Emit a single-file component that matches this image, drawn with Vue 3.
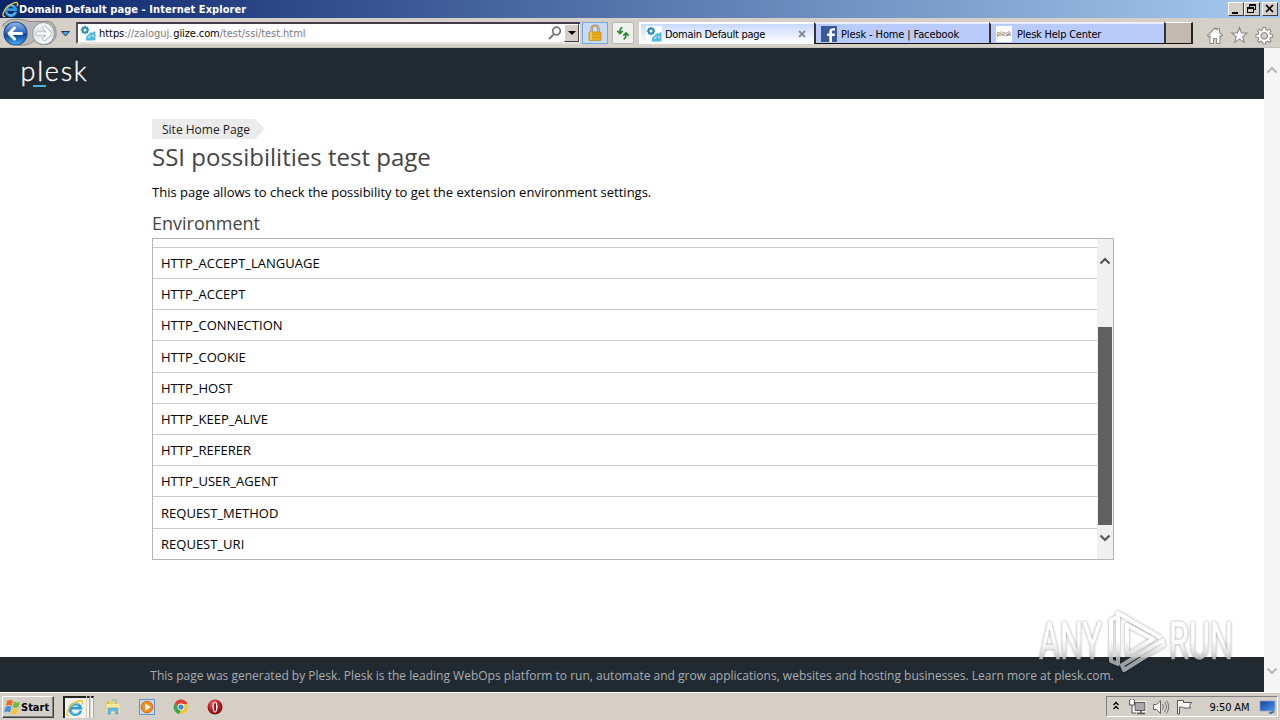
<script setup>
const rows = [
  'HTTP_ACCEPT_LANGUAGE', 'HTTP_ACCEPT', 'HTTP_CONNECTION', 'HTTP_COOKIE', 'HTTP_HOST',
  'HTTP_KEEP_ALIVE', 'HTTP_REFERER', 'HTTP_USER_AGENT', 'REQUEST_METHOD', 'REQUEST_URI',
]
</script>

<template>
  <div class="desktop">
    <svg class="defs" width="0" height="0">
      <defs>
        <linearGradient id="orb" x1="0" y1="0" x2="0" y2="1">
          <stop offset="0" stop-color="#8fb9ea" /><stop offset=".45" stop-color="#2e6cc4" />
          <stop offset=".55" stop-color="#0c459f" /><stop offset="1" stop-color="#49b0ee" />
        </linearGradient>
        <linearGradient id="orb2" x1="0" y1="0" x2="0" y2="1">
          <stop offset="0" stop-color="#f4f7fa" /><stop offset=".5" stop-color="#dbe1e9" /><stop offset="1" stop-color="#fafcfe" />
        </linearGradient>
        <linearGradient id="screen" x1="0" y1="0" x2="1" y2="1">
          <stop offset="0" stop-color="#143f9c" /><stop offset="1" stop-color="#4b9be8" />
        </linearGradient>
        <radialGradient id="red" cx=".4" cy=".3" r=".7">
          <stop offset="0" stop-color="#f06a6a" /><stop offset=".6" stop-color="#b81820" /><stop offset="1" stop-color="#7c0a10" />
        </radialGradient>
        <symbol id="ie" viewBox="0 0 18 18">
          <path d="M14.700 11.600A5.400 5.400 0 1 1 14.800 9.200H5" fill="none" stroke="#2b9ce0" stroke-width="2.800" />
          <path d="M13.800 12A5 5 0 0 1 5 12.500M5 7a5 5 0 0 1 8-1.500" fill="none" stroke="#8bd8f8" stroke-width="1" />
          <path d="M3.500 16.300C-1 17.500 1 10 6 5.800 10.500 2 16 .4 16.600 2.600c.3 1-.2 2-.8 3" fill="none" stroke="#f2c230" stroke-width="1.500" />
        </symbol>
        <symbol id="gears" viewBox="0 0 16 16">
          <path d="M0 0h16v16H0z" fill="#fff" />
          <circle cx="5" cy="5" r="2.500" fill="none" stroke="#2a8fb0" stroke-width="2" />
          <path d="M5 .8v2M5 7.200v2M.8 5h2M7.200 5h2M2 2l1 1M7 7l1 1M2 8l1-1M7 3l1-1" stroke="#2a8fb0" stroke-width="1.300" />
          <path d="M9.500 8.500L11 7l1.500.8L14.500 6l1 1v8l-1.500.5H6L5.500 14l1-1-.5-2 2-.5.5-1.500z" fill="#51b9df" />
          <path d="M8.500 13l2-2.500M12.500 10l1 2" stroke="#e4f5fa" stroke-width="1.100" />
        </symbol>
      </defs>
    </svg>

    <div class="titlebar">
      <svg class="ie-title" viewBox="0 0 18 18"><use href="#ie" /></svg>
      <span class="title">Domain Default page - Internet Explorer</span>
      <div class="winbtns">
        <i><svg viewBox="0 0 13 12"><path d="M3 9h6v2H3z" /></svg></i>
        <i><svg viewBox="0 0 13 12"><path d="M4 1h7v6H9V6h1V3H5v1H4zM2 4h7v6H2zM3 6v3h5V6z" fill-rule="evenodd" /></svg></i>
        <i class="close"><svg viewBox="0 0 13 12"><path d="M3 2l7 7M10 2L3 9" stroke="#000" stroke-width="1.700" /></svg></i>
      </div>
    </div>

    <div class="toolbar">
      <svg class="nav" width="75" height="30" viewBox="0 0 75 30">
        <path d="M2 8C8-1 21 0 29 3.500h14c8-2 14 3 13 14-2 10-15 12-22 5-5 6-16 6-22 2" fill="#bbb8b3" stroke="#8f8c88" />
        <circle cx="15.500" cy="15.500" r="11.500" fill="url(#orb)" stroke="#234e91" stroke-width="1.200" />
        <path d="M9 15.500l5.500-5.500M9 15.500l5.500 5.500M9.500 15.500h12" stroke="#fff" stroke-width="3" fill="none" stroke-linecap="round" />
        <circle cx="43.500" cy="15.500" r="11" fill="url(#orb2)" stroke="#8d929a" />
        <path d="M50 15.500L44.500 10M50 15.500L44.500 21M49.500 15.500h-12" stroke="#a9afb8" stroke-width="4" fill="none" stroke-linecap="round" />
        <path d="M50 15.500L44.500 10M50 15.500L44.500 21M49.500 15.500h-12" stroke="#fff" stroke-width="2.600" fill="none" stroke-linecap="round" />
        <path d="M61.500 13.500h8l-4 4.500z" fill="#4fa3dc" stroke="#12395f" />
      </svg>
      <div class="address">
        <svg class="fav" viewBox="0 0 16 16"><use href="#gears" /></svg>
        <span class="url"><b>https</b>://zaloguj.<b>giize.com</b>/test/ssi/test.html</span>
        <svg class="mag" viewBox="0 0 14 14"><circle cx="8.500" cy="5" r="3.800" /><path d="M6 8L1 13" /></svg>
        <i class="drop"><svg viewBox="0 0 13 15"><path d="M3 6h8l-4 4z" /></svg></i>
      </div>
      <div class="lock">
        <svg viewBox="0 0 16 18"><path d="M4.500 9V5a3.500 3.500 0 0 1 7 0v4" fill="none" stroke="#a07d38" stroke-width="2.200" /><path d="M4.500 9V5a3.500 3.500 0 0 1 7 0v4" fill="none" stroke="#f0dfae" stroke-width=".7" /><path d="M2 8h12v8.500H2z" fill="#e9ae1c" stroke="#b98110" stroke-width=".6" /><path d="M2 10.500h12M2 13.500h12" stroke="#cf951a" stroke-width=".8" /><path d="M4 8v8" stroke="#ffe480" /></svg>
      </div>
      <div class="refresh">
        <svg viewBox="0 0 16 16"><path d="M7.500 2.500C5.500 2.500 5 4 5 8M2.300 5.800L5 8.500l2.700-2.700" /><path d="M8.500 14c2 0 2.500-1.500 2.500-5.500M8.300 10.700L11 8l2.700 2.700" /></svg>
      </div>
      <div class="tabs">
        <div class="tab active"><svg class="fav" viewBox="0 0 16 16"><use href="#gears" /></svg><span class="t1">Domain Default page</span><svg class="x" viewBox="0 0 8 8"><path d="M1 1l6 6M7 1L1 7" /></svg></div>
        <div class="tab"><svg class="fav" viewBox="0 0 16 16"><path d="M0 0h16v16H0z" fill="#3b5998" /><path d="M11 16V10h2.600l.4-2.500h-3V6c0-1 .4-1.400 1.400-1.400H14V2.300C11 1.800 8.300 2.300 8.300 5.500v2H6V10h2.300v6z" fill="#fff" /></svg><span class="t2">Plesk - Home | Facebook</span></div>
        <div class="tab"><svg class="fav" viewBox="0 0 16 16"><path d="M0 0h16v16H0z" fill="#fff" /><text x="0.500" y="10" font-size="6.500" textLength="15" fill="#555">plesk</text></svg><span class="t3">Plesk Help Center</span></div>
        <div class="newtab"></div>
      </div>
      <svg class="tools" width="68" height="20" viewBox="0 0 68 20">
        <g fill="#fff" stroke="#8b8b8b" stroke-width="1.100">
          <path d="M1.500 10.500L9 3l2 2V3.500h2.500v4l3 3-1.300 1.300-1.200-1v7.700h-3.500v-5h-3v5H4v-7.700l-1.200 1z" />
          <path d="M33.500 2.500l2 5.400 5.700.2-4.500 3.600 1.600 5.600-4.800-3.200-4.800 3.200 1.600-5.600-4.500-3.600 5.700-.2z" />
          <path fill-rule="evenodd" d="M57 2.500h2.500l.4 2.200 1.500.7 1.900-1.300L65 5.800l-1.200 1.900.6 1.500 2.200.4V12l-2.200.4-.6 1.500 1.200 1.900-1.700 1.700-1.900-1.300-1.500.7-.4 2.100H57l-.4-2.100-1.500-.7-1.900 1.300-1.700-1.700 1.200-1.900-.6-1.500-2.200-.4V9.600l2.200-.4.6-1.500-1.200-1.900 1.700-1.700 1.900 1.300 1.500-.7zM58.200 7.500a3.300 3.300 0 1 0 .1 0z" />
        </g>
      </svg>
    </div>

    <div class="browser">
      <div class="page">
        <header><div class="logo">plesk</div></header>
        <main>
          <a class="crumb"><span>Site Home Page</span></a>
          <h1><span>SSI possibilities test page</span></h1>
          <p><span>This page allows to check the possibility to get the extension environment settings.</span></p>
          <h2><span>Environment</span></h2>
          <div class="box">
            <div class="list">
              <div v-for="r in rows" :key="r" class="row">{{ r }}</div>
            </div>
            <div class="inner-scroll">
              <svg viewBox="0 0 12 10"><path d="M1.500 7.500L6 3l4.500 4.500" /></svg>
              <div class="thumb"></div>
              <svg viewBox="0 0 12 10"><path d="M1.500 2.500L6 7l4.500-4.500" /></svg>
            </div>
          </div>
        </main>
        <footer><span>This page was generated by Plesk. Plesk is the leading WebOps platform to run, automate and grow applications, websites and hosting businesses. Learn more at plesk.com.</span></footer>
      </div>
      <div class="scroll">
        <svg viewBox="0 0 12 10"><path d="M1.500 7.500L6 3l4.500 4.500" /></svg>
        <svg viewBox="0 0 12 10"><path d="M1.500 2.500L6 7l4.500-4.500" /></svg>
      </div>
      <svg class="watermark" width="214" height="74" viewBox="0 0 214 74">
        <defs><linearGradient id="fade" x1="0" y1="0" x2="0" y2="70" gradientUnits="userSpaceOnUse"><stop offset=".5" stop-color="#fff" /><stop offset=".66" stop-color="#e2e2e2" /><stop offset=".8" stop-color="#aaadaf" /></linearGradient></defs>
        <text x="5" y="54" textLength="63" lengthAdjust="spacingAndGlyphs">ANY</text>
        <text x="135" y="54" textLength="64" lengthAdjust="spacingAndGlyphs">RUN</text>
        <g fill="none" stroke="url(#fade)" stroke-width="4" stroke-linejoin="round">
          <path d="M83 12l-6 3v41l7 3V8l43 25" />
          <path d="M93 20v30l26-16zM128 36L88 60l2 5 40-25-3-6" />
        </g>
      </svg>
    </div>

    <div class="taskbar">
      <div class="start">
        <svg viewBox="0 0 17 16"><path d="M3 2q3-2 6 0L7.500 7Q5 5 2 7z" fill="#ef6827" /><path d="M10 2.500q3 2 6 0L14.500 8q-3 2-6 0z" fill="#75b943" /><path d="M1.700 8q3-2 5.700 0L6 13.500q-3-2-6 0z" fill="#4290dd" /><path d="M8.300 9q3 2 6 0L13 14.300q-3 2-6 0z" fill="#f5c52c" /></svg>
        <span>Start</span>
      </div>
      <div class="task"><svg viewBox="0 0 18 18"><use href="#ie" /></svg></div>
      <i class="stack"></i><i class="stack"></i>
      <div class="quick">
        <svg width="16" height="16" viewBox="0 0 16 16"><path d="M1 14V2h5l1 1.500h6V14z" fill="#e9cf70" /><path d="M3 2v11M7 1h4v5" fill="none" stroke="#8cc66a" /><path d="M2 5h12l1 9H1z" fill="#f8e99d" /><path d="M3 15V9h10v6h-2.500v-3h-5v3z" fill="#68b8e6" stroke="#4290c0" stroke-width=".5" /></svg>
        <svg width="16" height="16" viewBox="0 0 17 17"><path d="M.5.5h16v16H.5z" fill="#c5dcf0" stroke="#5d8fc0" /><circle cx="8.500" cy="8.500" r="6.200" fill="#f48b20" stroke="#d16b12" /><path d="M6.500 4.500l6 4-6 4z" fill="#fff" /></svg>
        <svg width="16" height="16" viewBox="0 0 16 16"><circle cx="8" cy="8" r="7" fill="#f2c62d" /><path d="M8 8v3l-2 4A7 7 0 0 1 2 4l3 5z" fill="#39a852" /><path d="M2 4a7 7 0 0 1 12.500 1H8L5 8.500z" fill="#dc4133" /><circle cx="8" cy="8" r="3.400" fill="#fff" /><circle cx="8" cy="8" r="2.600" fill="#4285d8" /></svg>
        <svg width="16" height="16" viewBox="0 0 16 16"><circle cx="8" cy="8" r="7.500" fill="url(#red)" /><ellipse cx="8" cy="8" rx="2.500" ry="5.500" fill="#fff" /><ellipse cx="8" cy="8" rx="1.100" ry="4.500" fill="#8d1820" /></svg>
      </div>
      <div class="tray">
        <svg width="97" height="20" viewBox="0 0 97 20">
          <path d="M6.500 8L9 5.500 11.500 8M6.500 12L9 9.500l2.500 2.500" fill="none" stroke="#000" stroke-width="1.300" />
          <path d="M28 5.500h10v8H28z" fill="#aaa" stroke="#555" /><path d="M27 4.500h12v10H27z" fill="none" stroke="#fff" stroke-width=".8" /><path d="M30 16.500h8M34 14v3" stroke="#555" stroke-width="1.500" /><path d="M22.500 3v5h5V3M25 8v8h4M23.500 3v-1M26.500 3v-1" fill="#fff" stroke="#555" />
          <path d="M46.500 7.500h3l4-4v13l-4-4h-3z" fill="#fff" stroke="#666" /><path d="M55.500 7q2 3 0 6M57.500 5q4 5 0 10M59.500 3.500q4.500 6.500 0 13" fill="none" stroke="#777" />
          <path d="M70.500 17V3.500h6v2h8l-2 3 1 2.500h-7l-1-1h-3v7z" fill="#fff" stroke="#555" />
        </svg>
        <span>9:50 AM</span>
        <svg width="17" height="16" viewBox="0 0 17 16"><path d="M1 2h15v10H1z" fill="url(#screen)" stroke="#8ea7cc" stroke-width=".7" /><path d="M9 14l5-2 2 1-4 2z" fill="#496390" /></svg>
      </div>
    </div>
  </div>
</template>

<style>
body { background: #fff; overflow: hidden; }
</style>
<style scoped>
* { box-sizing: border-box; }
.desktop { width: 1280px; height: 720px; overflow: hidden; font-family: "DejaVu Sans Condensed", "DejaVu Sans", sans-serif; font-stretch: condensed; font-size: 11px; color: #000; display: flex; flex-direction: column; }
svg { display: block; flex: none; }
span { white-space: nowrap; display: inline-block; }
.defs { height: 0; }
.titlebar { height: 18px; background: linear-gradient(90deg, #0a246a, #a6caf0); display: flex; align-items: center; flex: none; }
.ie-title { width: 17px; height: 17px; margin-left: 2px; }
.title { color: #fff; font-weight: bold; line-height: 18px; padding-top: 1px; letter-spacing: .06px; }
.winbtns { margin-left: auto; margin-right: 2px; display: flex; }
.winbtns i { width: 16px; height: 14px; background: #d4d0c8; border: 1px solid; border-color: #fff #404040 #404040 #fff; }
.winbtns .close { margin-left: 2px; }
.winbtns svg { width: 13px; height: 12px; }
.toolbar { height: 30px; background: #d4d0c8; display: flex; flex: none; align-items: flex-start; border-bottom: 1px solid #c4c1ba; }
.nav { margin-right: 1px; }
.address { margin-top: 4px; width: 504px; height: 22px; background: #fff; border: 2px solid; border-color: #433b4b #d4d0c8 #e6e3de #55505a; border-right: 0; display: flex; align-items: center; }
.fav { width: 16px; height: 16px; }
.address .fav { margin: 0 3px 0 2px; }
.url { color: #7c7c7c; letter-spacing: -.05px; padding-top: 1px; }
.url b { font-weight: normal; color: #000; }
.url b:last-of-type { margin-left: 1px; letter-spacing: -.1px; }
.mag { margin-left: auto; width: 14px; height: 14px; fill: none; stroke: #777; stroke-width: 1.800; margin-right: 2px; }
.drop { width: 15px; height: 18px; margin-right: 1px; background: #d4d0c8; border: 1px solid; border-color: #fff #404040 #404040 #fff; }
.drop svg { width: 13px; height: 15px; }
.lock { width: 26px; height: 22px; margin: 4px 0 0 2px; background: #c5dbf8; border: 1px solid #78a7df; padding: 1px 4px; }
.lock svg { width: 16px; height: 18px; }
.refresh { width: 22px; height: 22px; margin: 4px 0 0 4px; background: #eef1ee; border: 1px solid #b9b6b0; border-radius: 2px; padding: 2px; }
.refresh svg { width: 16px; height: 16px; fill: none; stroke: #2d8a34; stroke-width: 1.700; }
.tabs { display: flex; margin: 4px 0 0 5px; }
.tab { height: 22px; width: 175px; background: #b9cbfa; border-top: 2px solid #e9effc; border-bottom: 1px solid #111; border-left: 2px solid #333; display: flex; align-items: center; padding-left: 5px; }
.tab.active { background: linear-gradient(#c6d8fc, #f7faff 85%); border-color: #fff; }
.tab .fav { margin-right: 4px; }
.tab span { padding-top: 1px; }
.t1 { letter-spacing: -.29px; margin-left: -1px; }
.t2 { letter-spacing: -.12px; }
.t3 { letter-spacing: -.22px; margin-left: 1px; }
.x { width: 8px; height: 8px; margin-left: auto; margin-right: 8px; stroke: #8a8a8a; stroke-width: 1.800; }
.newtab { width: 29px; height: 22px; background: #c2b9b0; border: 1px solid; border-color: #fff #222 #111 #333; border-left-width: 2px; border-right-width: 2px; }
.tools { margin: 7px 0 0 13px; }
.browser { height: 644px; flex: none; display: flex; position: relative; }
.page { width: 1264px; background: #fff; font-family: "Open Sans", sans-serif; font-stretch: normal; display: flex; flex-direction: column; }
header { height: 51px; background: #222a31; flex: none; padding-left: 20px; }
.logo { font: 300 27px/46px Lato, sans-serif; color: #fff; letter-spacing: 1.700px; position: relative; width: 70px; padding-left: .6px; -webkit-text-stroke: .35px #fff; }
.logo::after { content: ""; position: absolute; left: 13px; top: 37px; width: 13px; height: 2px; background: #4bb2d8; }
main { width: 962px; margin-left: 152px; padding-top: 20px; flex: 1; }
.crumb { display: flex; width: 113px; height: 20px; background: #ebebeb; clip-path: polygon(0 0, 103px 0, 100% 50%, 103px 100%, 0 100%); font-size: 12px; line-height: 22px; padding-left: 10px; color: #222; }
h1 { margin: 0; font-size: 24px; font-weight: 400; line-height: 36px; height: 40px; color: #444; }
p { margin: 0; font-size: 13px; line-height: 26px; height: 32px; }
h2 { margin: 0; font-size: 18px; font-weight: 400; line-height: 24px; height: 27px; color: #444; }
.box { height: 322px; border: 1px solid #b5b5b5; display: flex; }
.list { flex: 1; padding-top: 7.850px; }
.row { height: 31.200px; border-top: 1px solid #cbcbcb; font-size: 13px; line-height: 31px; padding: .18px 0 0 8px; letter-spacing: .01px; }
.inner-scroll { width: 16px; background: #f0f0f0; padding: 17px 1px 16px; display: flex; flex-direction: column; align-items: center; }
.inner-scroll svg, .scroll svg { width: 12px; height: 10px; fill: none; stroke: #555; stroke-width: 2.200; }
.thumb { width: 14px; height: 198px; margin-top: 61px; background: #606060; flex: none; }
.inner-scroll svg:last-child { margin-top: 8px; }
footer { height: 35px; background: #222a31; color: #a8adb1; font-size: 12px; line-height: 38px; padding-left: 150.300px; letter-spacing: .006px; }
.scroll { width: 16px; background: #f5f5f5; display: flex; flex-direction: column; align-items: center; justify-content: space-between; padding: 17px 0 16px; }
.scroll svg { stroke: #b8b8b8; }
.watermark { position: absolute; left: 1034px; top: 557px; filter: drop-shadow(0 0 1.500px rgba(0, 0, 0, .42)); opacity: .9; overflow: visible; }
.watermark text { font: 400 51px Roboto, sans-serif; fill: url(#fade); stroke: url(#fade); stroke-width: .5px; }
.taskbar { height: 28px; background: #d4d0c8; border-top: 1px solid #fff; display: flex; align-items: flex-start; flex: none; padding-top: 3px; }
.start { margin-left: 2px; width: 52px; height: 22px; border: 1px solid; border-color: #fff #404040 #404040 #fff; box-shadow: inset -1px -1px #808080; display: flex; align-items: center; padding-left: 1px; font-weight: bold; font-size: 11px; }
.start svg { width: 17px; height: 16px; }
.task { margin-left: 9px; width: 23px; height: 22px; border: 1px solid #222; border-width: 2px 0 0 2px; background: #f4f2ed; padding: 1px; }
.task svg { width: 18px; height: 18px; }
.stack { width: 3px; height: 22px; margin-left: 1px; background: #f6f4ef; border-top: 2px solid #222; border-right: 1px solid #aaa; }
.quick { display: flex; gap: 18px; margin: 3px 0 0 11px; }
.tray { margin-left: auto; margin-right: 2px; width: 172px; height: 21px; border: 1px solid; border-color: #808080 #fff #fff #808080; display: flex; align-items: center; }
.tray span { margin-left: 5.500px; width: 48px; letter-spacing: -.1px; padding-top: 1px; }
.tray svg:last-child { margin-left: 1.500px; }
</style>
